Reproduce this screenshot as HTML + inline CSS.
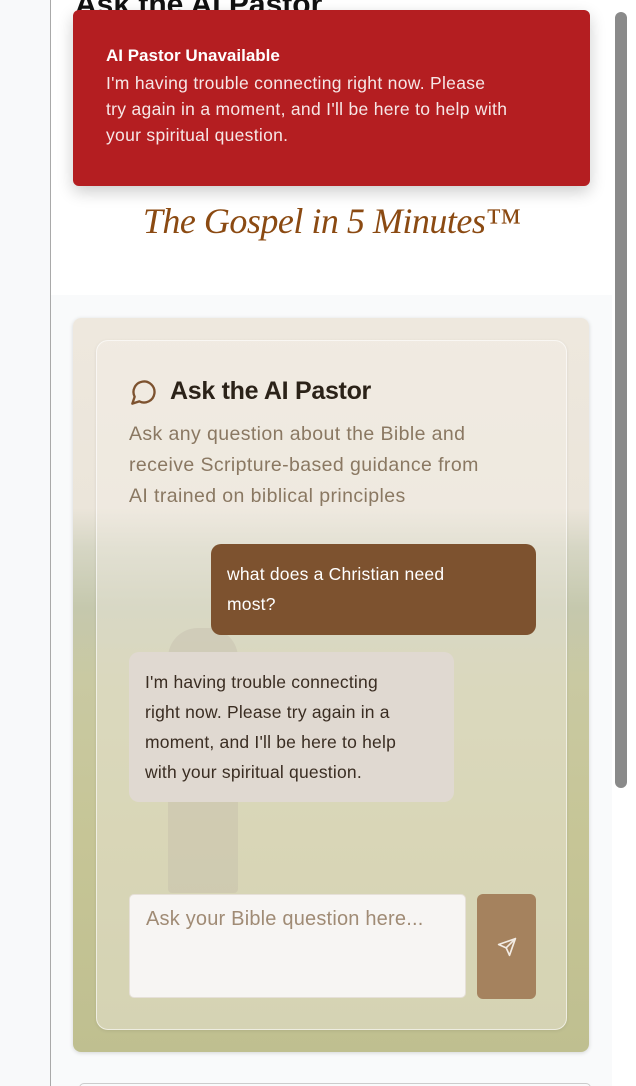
<!DOCTYPE html>
<html><head><meta charset="utf-8"><style>
*{box-sizing:border-box;margin:0;padding:0}
body{width:636px;height:1086px;overflow:hidden;background:#f8f9fa;font-family:"Liberation Sans",sans-serif;position:relative}
.frame{position:absolute;left:50px;top:0;width:562px;height:1086px;background:#f9fafb;border-left:1px solid #a9a9a9;overflow:hidden}
.top{position:absolute;left:0;top:0;width:561px;height:295px;background:#fff}
.h1{position:absolute;left:24px;top:-12px;font-size:30px;font-weight:bold;color:#111}
.toast{position:absolute;left:22px;top:10px;width:517px;height:176px;background:#b41e21;border-radius:6px;box-shadow:0 6px 16px rgba(0,0,0,.2);color:#fff;padding:36px 33px}
.toast b{font-size:17px;display:block;margin-bottom:4px}
.toast p{font-size:17.5px;line-height:26px;color:#f6e6e6;white-space:nowrap;letter-spacing:.3px}
.logo{position:absolute;left:0;width:561px;top:200px;text-align:center;font-family:"Liberation Serif",serif;font-style:italic;font-size:36px;color:#8b4a12;letter-spacing:-.5px}
.card{position:absolute;left:22px;top:318px;width:516px;height:734px;border-radius:8px;overflow:hidden;box-shadow:0 1px 4px rgba(0,0,0,.15);
background:linear-gradient(#eee8de 0,#ebe5da 190px,#d6d6c4 230px,#c5c8ad 290px,#c9c9a2 360px,#c6c596 520px,#bfbf90 734px)}
.fig{position:absolute;left:95px;top:310px;width:70px;height:265px;border-radius:30px 30px 4px 4px;background:rgba(150,135,120,.3)}
.glass{position:absolute;left:23px;top:22px;width:471px;height:690px;border-radius:12px;border:1px solid rgba(255,255,255,.6);background:rgba(245,240,232,.4);box-shadow:0 1px 3px rgba(0,0,0,.08)}
.title{position:absolute;left:33px;top:36px;font-size:25px;font-weight:bold;color:#2b2218;display:flex;align-items:center;gap:12px;letter-spacing:-.3px}
.sub{position:absolute;left:32px;top:78px;white-space:nowrap;font-size:19.5px;line-height:31px;color:#8a7862;letter-spacing:.4px}
.ub{position:absolute;left:114px;top:203px;width:325px;height:91px;background:#7d522f;border-radius:10px;color:#fff;font-size:17.5px;line-height:30px;padding:15px 16px 15px 16px}
.ub span,.ab span{display:block;width:250px;letter-spacing:.2px}
.ab{position:absolute;left:32px;top:311px;width:325px;height:150px;background:#e0d9d1;border-radius:10px;color:#3a2d22;font-size:17.5px;line-height:30px;padding:15px 16px}
.ab span{width:270px}
.inp{position:absolute;left:32px;top:553px;width:337px;height:104px;background:#f7f5f3;border-radius:5px;border:1px solid #e6e0d8;color:#a08b75;font-size:20px;padding:13px 16px;letter-spacing:.2px}
.send{position:absolute;left:380px;top:553px;width:59px;height:105px;background:#a5825e;border-radius:6px;display:flex;align-items:center;justify-content:center}
.btm{position:absolute;left:28px;top:1083px;width:512px;height:10px;border:1px solid #ccc;border-radius:6px}
.sb{position:absolute;left:612px;top:0;width:24px;height:1086px;background:#fff}
.thumb{position:absolute;left:615px;top:12px;width:12px;height:776px;border-radius:6px;background:#8a8a8a}
</style></head><body>
<div class="frame">
 <div class="top">
  <div class="h1">Ask the AI Pastor</div>
  <div class="toast"><b>AI Pastor Unavailable</b><p>I'm having trouble connecting right now. Please<br>try again in a moment, and I'll be here to help with<br>your spiritual question.</p></div>
  <div class="logo">The Gospel in 5 Minutes™</div>
 </div>
 <div class="card">
  <div class="fig"></div>
  <div class="glass">
   <div class="title"><svg width="28" height="28" viewBox="0 0 24 24" fill="none" stroke="#7d522f" stroke-width="2" stroke-linecap="round" stroke-linejoin="round"><path d="M7.9 20A9 9 0 1 0 4 16.1L2 22z"/></svg>Ask the AI Pastor</div>
   <div class="sub">Ask any question about the Bible and<br>receive Scripture-based guidance from<br>AI trained on biblical principles</div>
   <div class="ub"><span>what does a Christian need most?</span></div>
   <div class="ab"><span>I'm having trouble connecting right now. Please try again in a moment, and I'll be here to help with your spiritual question.</span></div>
   <div class="inp">Ask your Bible question here...</div>
   <div class="send"><svg width="20" height="20" viewBox="0 0 24 24" fill="none" stroke="#f3ece4" stroke-width="2" stroke-linecap="round" stroke-linejoin="round"><path d="M22 2 11 13"/><path d="M22 2 15 22 11 13 2 9z"/></svg></div>
  </div>
 </div>
 <div class="btm"></div>
</div>
<div class="sb"></div><div class="thumb"></div>
</body></html>
